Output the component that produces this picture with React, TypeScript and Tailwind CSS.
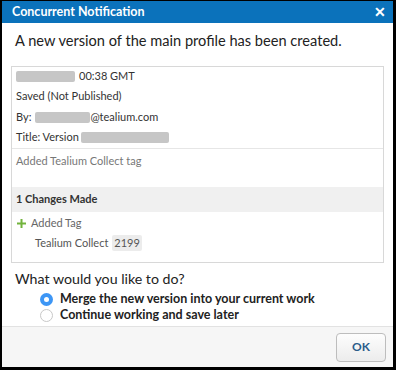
export default function App() {
  return (
    <div className="w-[396px] h-[370px] bg-black pl-[2px] pr-[3px] pt-[1px] pb-[3px] font-['Lato',sans-serif]">
      <div className="h-full bg-white flex flex-col">
        {/* header */}
        <div className="h-[22px] bg-[#0b72bb] flex items-center justify-between pl-[10px] pr-[7px]">
          <span className="text-white text-[12.5px] font-bold">Concurrent Notification</span>
          <span className="text-white text-[14px] font-bold leading-none">✕</span>
        </div>

        <div className="flex-1 px-[9px]">
          <div className="text-[14.6px] text-[#222] pt-[8px] pl-[4px] leading-[20px]">
            A new version of the main profile has been created.
          </div>

          <div className="mt-[15px] border border-[#d8d8d8] h-[197px] text-[11px] text-[#333]">
            <div className="px-[4px]">
              <div className="h-[19px] flex items-center gap-[4px]">
                <span className="w-[59px] h-[11px] bg-[#c6c6c6] rounded-[2px]" />
                <span>00:38 GMT</span>
              </div>
              <div className="h-[21px] flex items-center">Saved (Not Published)</div>
              <div className="h-[21px] flex items-center gap-[4px]">
                <span>By:</span>
                <span className="w-[55px] h-[11px] bg-[#c6c6c6] rounded-[2px]" />
                <span className="-ml-[4px]">@tealium.com</span>
              </div>
              <div className="h-[19px] flex items-center gap-[2px]">
                <span>Title: Version</span>
                <span className="w-[88px] h-[11px] bg-[#c6c6c6] rounded-[2px]" />
              </div>
            </div>
            <div className="border-t border-[#e6e6e6] mt-[1px] h-[39px] px-[4px] pt-[4px] text-[#777]">
              Added Tealium Collect tag
            </div>
            <div className="bg-[#f0f0f0] h-[25px] flex items-center px-[4px] font-bold text-[#333]">
              1 Changes Made
            </div>
            <div className="px-[5px] pt-[2px]">
              <div className="h-[19px] flex items-center gap-[5px] text-[#666]">
                <svg width="9" height="9" viewBox="0 0 9 9">
                  <path d="M3.5 0h2v3.5H9v2H5.5V9h-2V5.5H0v-2h3.5z" fill="#72b33d" />
                </svg>
                <span>Added Tag</span>
              </div>
              <div className="h-[20px] flex items-center gap-[4px] pl-[18px] text-[#555]">
                <span>Tealium Collect</span>
                <span className="bg-[#ececec] rounded-[2px] px-[2px]">2199</span>
              </div>
            </div>
          </div>

          <div className="text-[14.2px] text-[#222] pl-[4px] mt-[6px] leading-[20px]">What would you like to do?</div>
          <div className="pl-[29px] pt-[2px] text-[12.5px] font-bold text-[#222]">
            <div className="h-[16px] flex items-center gap-[7px]">
              <span className="w-[13px] h-[13px] rounded-full bg-[#3d96f5] flex items-center justify-center">
                <span className="w-[5px] h-[5px] rounded-full bg-white" />
              </span>
              Merge the new version into your current work
            </div>
            <div className="h-[16px] flex items-center gap-[7px]">
              <span className="w-[13px] h-[13px] rounded-full border border-[#c8c8c8] bg-white" />
              Continue working and save later
            </div>
          </div>
        </div>

        {/* footer */}
        <div className="h-[41px] border-t border-[#e2e2e2] bg-[#f6f6f6] flex items-center justify-end pr-[7px]">
          <button className="w-[50px] h-[29px] rounded-[4px] border border-[#bdbdbd] bg-gradient-to-b from-[#fdfdfd] to-[#ececec] text-[12px] font-bold text-[#2b5c8a]">
            OK
          </button>
        </div>
      </div>
    </div>
  );
}
